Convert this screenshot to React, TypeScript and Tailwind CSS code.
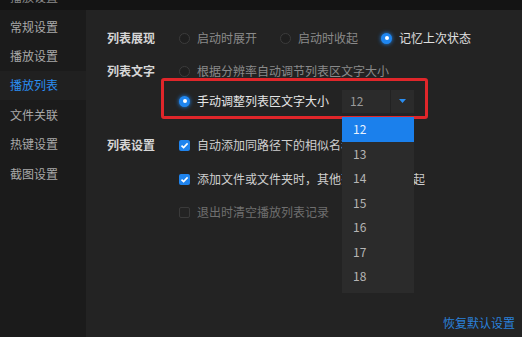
import React from "react";

const menu = ["常规设置", "播放设置", "播放列表", "文件关联", "热键设置", "截图设置"];
const sizes = ["12", "13", "14", "15", "16", "17", "18"];

function Radio({ on }: { on?: boolean }) {
  if (on) {
    return (
      <span className="flex h-[11px] w-[11px] shrink-0 items-center justify-center rounded-full bg-[#1f86f0] shadow-[0_0_4px_#1f86f0]">
        <span className="h-[4px] w-[4px] rounded-full bg-white" />
      </span>
    );
  }
  return <span className="h-[11px] w-[11px] shrink-0 rounded-full border border-[#3c3c3c] bg-[#1f1f1f]" />;
}

function Check({ on }: { on?: boolean }) {
  if (on) {
    return (
      <span className="flex h-[11px] w-[11px] shrink-0 items-center justify-center rounded-[2px] bg-[#1f84ee]">
        <svg width="9" height="9" viewBox="0 0 9 9">
          <path d="M1.5 4.6 L3.6 6.6 L7.6 2.4" fill="none" stroke="white" strokeWidth="1.6" />
        </svg>
      </span>
    );
  }
  return <span className="h-[11px] w-[11px] shrink-0 rounded-[2px] border border-[#3a3a3a]" />;
}

export default function App() {
  return (
    <div
      className="flex h-[337px] w-[522px] flex-col overflow-hidden bg-[#232323] text-[12px] leading-[16px]"
      style={{ fontFamily: '"Noto Sans CJK SC", "Noto Sans", sans-serif' }}
    >
      <div className="h-[10px] shrink-0 overflow-hidden bg-[#141414] pl-[10px]">
        <div className="mt-[-11px] text-[#8a8a8a]">播放设置</div>
      </div>
      <div className="flex flex-1">
        <div className="w-[86px] shrink-0 bg-[#1b1b1b] pt-[2px]">
          {menu.map((m) => (
            <div
              key={m}
              className={
                m === "播放列表"
                  ? "flex h-[29.4px] items-center bg-[#202020] pl-[10px] text-[#2a8ef2]"
                  : "flex h-[29.4px] items-center pl-[10px] text-[#a9a9a9]"
              }
            >
              {m}
            </div>
          ))}
        </div>

        <div className="relative flex flex-1 flex-col pl-[21px] pt-[16px] text-[#bdbdbd]">
          <div className="flex h-[24px] items-center">
            <div className="w-[72px] font-bold text-[#d6d6d6]">列表展现</div>
            <div className="flex items-center gap-[23px]">
              <div className="flex items-center gap-[7px] text-[#8a8a8a]">
                <Radio />
                启动时展开
              </div>
              <div className="flex items-center gap-[7px] text-[#8a8a8a]">
                <Radio />
                启动时收起
              </div>
              <div className="flex items-center gap-[7px] text-[#e0e0e0]">
                <Radio on />
                记忆上次状态
              </div>
            </div>
          </div>

          <div className="mt-[9px] flex h-[24px] items-center">
            <div className="w-[72px] font-bold text-[#d6d6d6]">列表文字</div>
            <div className="flex items-center gap-[7px] text-[#8a8a8a]">
              <Radio />
              根据分辨率自动调节列表区文字大小
            </div>
          </div>

          <div className="relative mt-[6px] flex h-[24px] items-center pl-[72px]">
            <div className="flex items-center gap-[7px] text-[#e6e6e6]">
              <Radio on />
              手动调整列表区文字大小
            </div>
            <div className="ml-[13px] flex h-[23px] w-[72px] items-center bg-[#2b2b2b]">
              <div className="flex-1 pl-[8px] text-[#9a9a9a]">12</div>
              <div className="flex h-full w-[24px] items-center justify-center border-l border-[#222]">
                <svg width="7" height="4" viewBox="0 0 7 4">
                  <path d="M0 0 H7 L3.5 4 Z" fill="#2a8ef2" />
                </svg>
              </div>
            </div>
            <div className="pointer-events-none absolute left-[54px] top-[-11px] h-[41px] w-[267px] rounded-[3px] border-[3px] border-[#e0262a]" />
          </div>

          <div className="mt-[20px] flex h-[24px] items-center">
            <div className="w-[72px] font-bold text-[#d6d6d6]">列表设置</div>
            <div className="flex items-center gap-[7px] whitespace-nowrap text-[#cfcfcf]">
              <Check on />
              自动添加同路径下的相似名称文件到列表
            </div>
          </div>
          <div className="mt-[10px] flex h-[24px] items-center pl-[72px]">
            <div className="flex items-center gap-[7px] whitespace-nowrap text-[#cfcfcf]">
              <Check on />
              添加文件或文件夹时，其他列表项自动收起
            </div>
          </div>
          <div className="mt-[9px] flex h-[24px] items-center pl-[72px]">
            <div className="flex items-center gap-[7px] text-[#6f6f6f]">
              <Check />
              退出时清空播放列表记录
            </div>
          </div>

          <div className="mt-auto flex justify-end pb-[6px] pr-[7px] text-[#2a80da]">恢复默认设置</div>

          <div className="absolute left-[256px] top-[107px] w-[72px] bg-[#2b2b2b] pb-[4px]">
            {sizes.map((s) => (
              <div
                key={s}
                className={
                  s === "12"
                    ? "flex h-[24.5px] items-center bg-[#1b80ec] pl-[11px] text-[#e8f2ff]"
                    : "flex h-[24.5px] items-center pl-[11px] text-[#b5b5b5]"
                }
              >
                {s}
              </div>
            ))}
          </div>
        </div>
      </div>
    </div>
  );
}
